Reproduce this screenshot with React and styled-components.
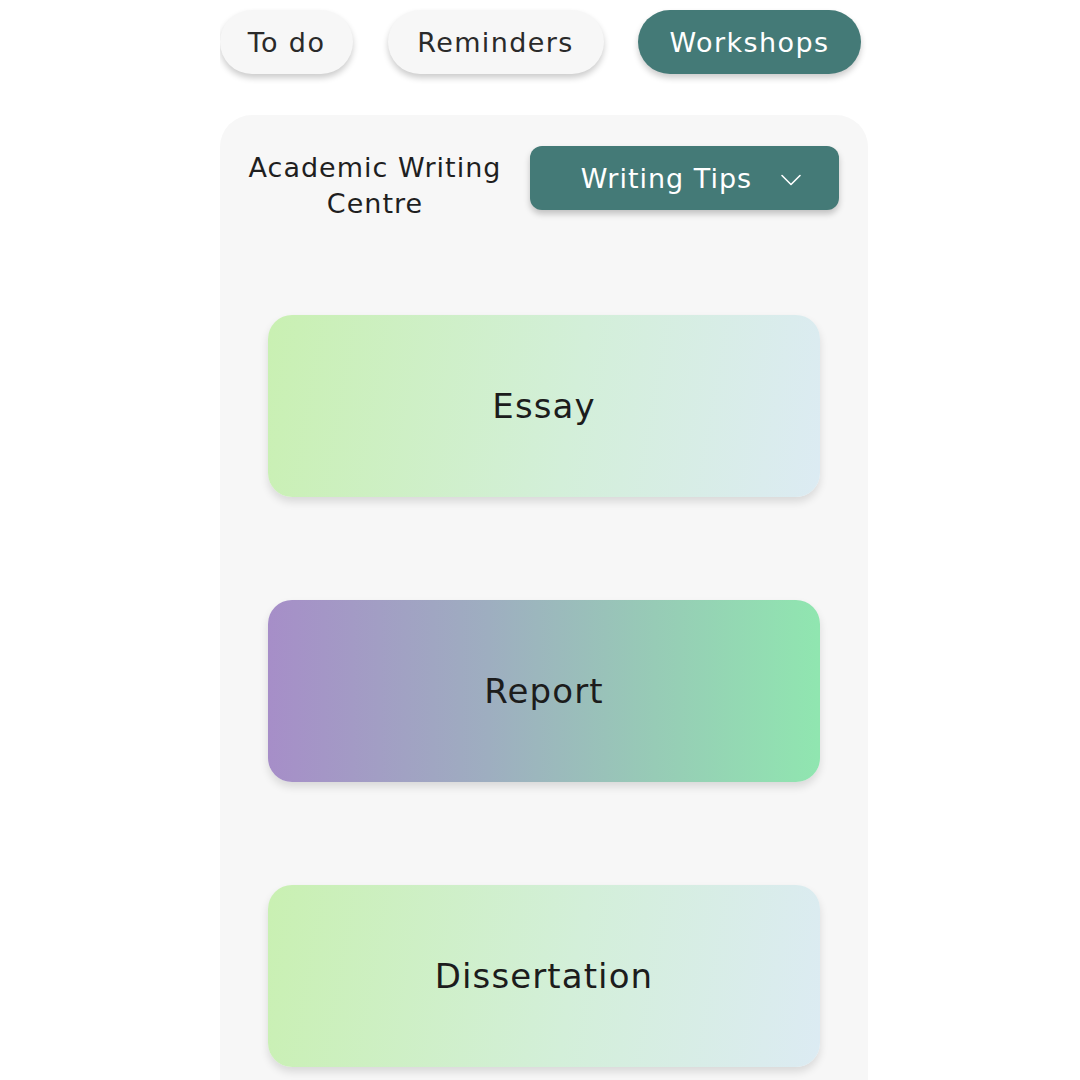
import styled, { createGlobalStyle } from "styled-components";

const GlobalStyle = createGlobalStyle`
  body {
    margin: 0;
    background: #ffffff;
    font-family: "DejaVu Sans", "Noto Sans", sans-serif;
    color: #1f1f1f;
  }
`;

const tabs = [
  { label: "To do", width: 133 },
  { label: "Reminders", width: 216 },
  { label: "Workshops", width: 223, active: true },
];

const cards = [
  { label: "Essay", kind: "mint" },
  { label: "Report", kind: "violet" },
  { label: "Dissertation", kind: "mint" },
];

export default function App() {
  return (
    <>
      <GlobalStyle />
      <Page>
        <TabRow>
          {tabs.map((t) => (
            <Tab key={t.label} $active={t.active} $width={t.width}>
              {t.label}
            </Tab>
          ))}
        </TabRow>
        <Panel>
          <PanelHeader>
            <CentreName>
              Academic Writing
              <br />
              Centre
            </CentreName>
            <Dropdown>
              Writing Tips
              <svg width="22" height="14" viewBox="0 0 22 14" fill="none">
                <path d="M2 2.5L11 11.5L20 2.5" stroke="#ffffff" strokeWidth="1.6" strokeLinecap="round" strokeLinejoin="round" />
              </svg>
            </Dropdown>
          </PanelHeader>
          <CardList>
            {cards.map((c) => (
              <Card key={c.label} $kind={c.kind}>
                {c.label}
              </Card>
            ))}
          </CardList>
        </Panel>
      </Page>
    </>
  );
}

const Page = styled.div`
  width: 648px;
  margin-left: 220px;
  padding-top: 10px;
  height: 1070px;
  overflow: hidden;
`;

const TabRow = styled.div`
  display: flex;
  justify-content: space-between;
  padding-right: 7px;
`;

const Tab = styled.div`
  width: ${(p) => p.$width}px;
  height: 64px;
  box-sizing: border-box;
  border-radius: 32px;
  display: flex;
  align-items: center;
  justify-content: center;
  font-size: 27px;
  letter-spacing: 1.4px;
  background: ${(p) => (p.$active ? "#447a77" : "#f7f7f7")};
  color: ${(p) => (p.$active ? "#ffffff" : "#2a2a2a")};
  box-shadow: 0 4px 6px rgba(0, 0, 0, 0.2);
`;

const Panel = styled.div`
  margin-top: 41px;
  background: #f7f7f7;
  border-radius: 32px;
  padding: 31px 29px 0 20px;
  height: 1000px;
`;

const PanelHeader = styled.div`
  display: flex;
  align-items: flex-start;
  justify-content: space-between;
`;

const CentreName = styled.div`
  width: 270px;
  text-align: center;
  font-size: 27px;
  line-height: 36px;
  letter-spacing: 1px;
  color: #1f1f1f;
  padding-top: 4px;
`;

const Dropdown = styled.div`
  width: 309px;
  height: 64px;
  box-sizing: border-box;
  padding-left: 14px;
  border-radius: 12px;
  background: #447a77;
  color: #ffffff;
  font-size: 27px;
  letter-spacing: 1px;
  display: flex;
  align-items: center;
  justify-content: center;
  gap: 28px;
  box-shadow: 0 4px 6px rgba(0, 0, 0, 0.22);

  svg {
    margin-top: 3px;
  }
`;

const CardList = styled.div`
  display: flex;
  flex-direction: column;
  align-items: center;
  gap: 103px;
  margin-top: 93px;
  padding-left: 9px;
`;

const Card = styled.div`
  width: 552px;
  height: 182px;
  border-radius: 24px;
  display: flex;
  align-items: center;
  justify-content: center;
  font-size: 34px;
  letter-spacing: 1.1px;
  color: #1c1c1c;
  background: ${(p) =>
    p.$kind === "violet"
      ? "linear-gradient(90deg, #a68ec8 0%, #9eaec0 40%, #97cbb6 70%, #90e6b0 100%)"
      : "linear-gradient(100deg, #c9f0b2 0%, #d3efd9 55%, #dcebf3 100%)"};
  box-shadow: 0 5px 8px rgba(0, 0, 0, 0.12);
`;
